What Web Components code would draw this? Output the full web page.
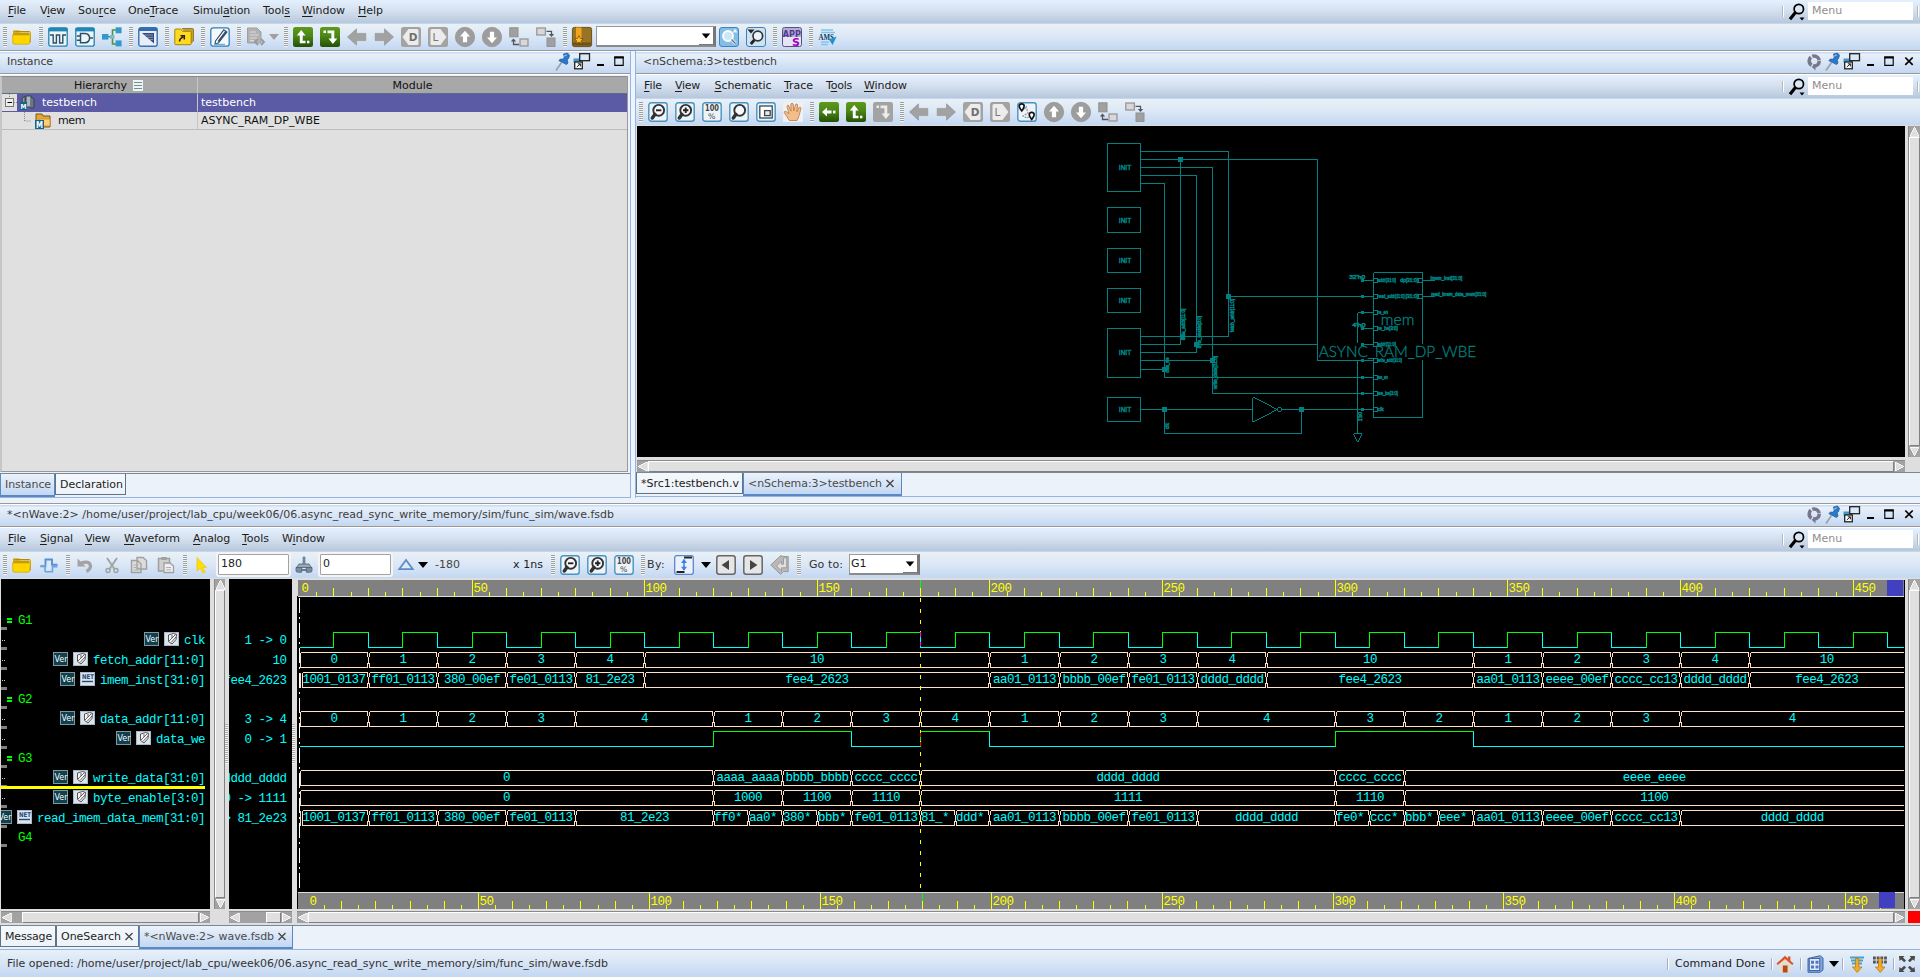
<!DOCTYPE html>
<html lang="en">
<head>
<meta charset="utf-8">
<title>nWave</title>
<style>
html,body{margin:0;padding:0;height:100%;overflow:hidden}
body{font:11px "DejaVu Sans",sans-serif;color:#1c1c1c;background:#ebf2fa}
</style>
</head>
<body>
<verdi-app></verdi-app>
<script>
const define=(name,html,setup)=>customElements.define(name,class extends HTMLElement{
  connectedCallback(){
    if(this.shadowRoot)return;
    const r=this.attachShadow({mode:'open'});
    const t=document.createElement('template');
    t.innerHTML=typeof html==='function'?html(this):html;
    r.append(t.content.cloneNode(true));
    if(setup)setup(this,r);
  }
});
const esc=s=>s.replace(/&/g,'&amp;').replace(/</g,'&lt;').replace(/>/g,'&gt;');
const ctx=document.createElement('canvas').getContext('2d');
const spacing=(text,w)=>{
  ctx.font='11px "DejaVu Sans"';
  return w?((w-ctx.measureText(text).width)/text.length).toFixed(3):0;
};

/* ---- icons, drawn on a 20x20 grid ---- */
const frame='<rect x=".8" y=".8" width="18.4" height="18.4" rx="2.5" fill="#edf3f8" stroke="#4a93bd" stroke-width="1.4"/>';
const green='<rect width="20" height="20" rx="2.5" fill="url(#g)"/><defs><linearGradient id="g" x2="0" y2="1"><stop stop-color="#5f9a1c"/><stop offset=".45" stop-color="#4b8716"/><stop offset="1" stop-color="#245006"/></linearGradient></defs>';
const gbox='<rect width="20" height="20" rx="2.5" fill="#a3a3a3"/>';
const upTurn='<path d="M3.8 8.5 8.2 3l4.400 5.500h-2.900v5.200h2.800v2.600H6.800V8.500z" fill="#fff"/><rect x="14" y="13.700" width="2.400" height="2.600" fill="#fff"/>';
const downTurn='<rect x="3.500" y="3.500" width="2.500" height="2.500" fill="#fff"/><path d="M7.500 3.500h6.800v8h3L12.900 17l-4.400-5.500h2.900V6.200H7.500z" fill="#fff"/>';
const folder='<path d="M1 4.5q0-1 1-1h5l1.5 2H1z" fill="#c99500"/><path d="M1 5.5h16v11H1z" fill="#c99a00"/><path d="M3.5 4.500h13.500q1.200 0 1.200 1v10" fill="none" stroke="#b98900"/><path d="M.5 8h16.600l1.400-1.600-.8 9.200q-.2 1.600-1.800 1.600H2q-1 0-1.100-1z" fill="#ffd500" stroke="#caa000" stroke-width=".7"/>';
const mag=(inner)=>frame+'<circle cx="10.700" cy="8.300" r="5.400" fill="#f7fafc" stroke="#333" stroke-width="1.900"/><path d="M7 12.300 4.300 16" stroke="#333" stroke-width="3.500" stroke-linecap="round"/>'+inner;
const circ='<circle cx="10" cy="10" r="9.7" fill="#9d9d9d" stroke="#8b8b8b" stroke-width=".6"/>';
const I={
folder,
wave:'<rect x=".8" y=".8" width="18.4" height="18.4" rx="2" fill="#eef5f9" stroke="#2383ad" stroke-width="1.3"/><path d="M.5 .8h19v3.6H.5z" fill="#1f86b6"/><path d="M2 8h3.200v8h3.200V8h3.200v8h3.200V8H18" fill="none" stroke="#2c4f6b" stroke-width="1.4"/>',
and:'<rect x=".8" y=".8" width="18.4" height="18.4" rx="2" fill="#eef5f9" stroke="#2383ad" stroke-width="1.3"/><path d="M.5 .8h19v3.6H.5z" fill="#1f86b6"/><path d="M5.5 6.5h4.5q4.5.4 4.6 4.6-.2 4.4-4.6 4.6H5.5zM1.8 9h3.700M1.8 13.300h3.700M14.6 11.100H18" fill="none" stroke="#2c4f6b" stroke-width="1.5"/>',
hier:'<path d="M5 9.8h7M15 3h-4.5v14H15" fill="none" stroke="#4d9440" stroke-width="1.6"/><g fill="#3498cf"><rect y="7" width="6.4" height="5.6"/><rect x="13.6" y=".3" width="6" height="6"/><rect x="13.6" y="13.4" width="6" height="6"/></g><rect x="8" y="8" width="4.5" height="3.8" fill="#7fb6dc"/>',
tri:'<rect x=".8" y=".8" width="18.4" height="18.4" rx="2" fill="#e8eef6" stroke="#3b70b0" stroke-width="1.4"/><path d="M1 1h18v3H1z" fill="#2f6db5"/><path d="M4 6h12v10.5z" fill="#344a78"/><path d="M6.5 8h8.500M9 10.300h6M11.5 12.600H15" stroke="#9fb1d2" stroke-width=".8"/>',
folder2:'<path d="M8 1.500h10.500q1 0 1 1V14l-2.500 2" fill="#c8a12a" stroke="#7d6a2c" stroke-width=".8"/><path d="M.8 3q0-1 1-1h5l1.700 2.300h7.700q1 0 1 1v11.400q0 1-1 1H1.800q-1 0-1-1z" fill="#ffd91a" stroke="#9b7c08" stroke-width=".9"/><path d="M5.500 14.500q0-3 3.700-4.500M6.500 8.800h3.800v3.800" stroke="#222" stroke-width="1.500" fill="none"/>',
edit:'<rect x=".8" y=".8" width="18.4" height="18.4" rx="2.5" fill="#f4f9fd" stroke="#2f7fb7" stroke-width="1.3"/><path d="M5.500 14 13.800 2.800l3 2.200L8.500 15.800l-3.400 1.400z" fill="#fff" stroke="#33506b" stroke-width="1.2"/><path d="M8.300 14.500 16.200 4.400" stroke="#33506b" stroke-width="1.800"/><path d="M5 17.500H15" stroke="#6caed6" stroke-width="1.400"/>',
doc:'<path d="M1.5 1h9.500l4 4v11H1.500z" fill="#b2b2b2" stroke="#a0a0a0"/><path d="M4 5h6M4 8h8.500M4 11h7M4 13.700h4" stroke="#dadada" stroke-width="1.200"/><path d="m12 12-3 3 3 3M15 12l3 3-3 3" fill="none" stroke="#999" stroke-width="1.8"/>',
upturn:green+upTurn,downturn:green+downTurn,
leftturn:green+'<path d="M3 10l5-4.600v3h4.500v3.200H8v3z" fill="#fff"/><rect x="14" y="8.600" width="2.500" height="2.800" fill="#fff"/>',
gdownturn:gbox+downTurn.replace(/#fff/g,'#ececec'),
left:'<path d="M.5 10 9.5 1.800v4.600h9.300v7.200H9.500v4.600z" fill="#a2a2a2" stroke="#8f8f8f" stroke-width=".6"/>',
right:'<path d="M19.5 10l-9-8.200v4.600H1.200v7.200h9.300v4.600z" fill="#a2a2a2" stroke="#8f8f8f" stroke-width=".6"/>',
d:gbox+'<path d="M1.5 10 7.500 2H16q1.500 0 1.500 1.500v13Q17.500 18 16 18H7.500z" fill="#ececec"/><text x="7.8" y="14" font-size="10.500" font-weight="bold" fill="#6f6f6f">D</text>',
l:gbox+'<path d="M18.5 10 12.500 2H4Q2.500 2 2.500 3.500v13Q2.500 18 4 18h8.500z" fill="#ececec"/><text x="4.6" y="14" font-size="10.500" fill="#777">L</text>',
up:circ+'<path d="M10 3.800 15 9.600h-2.900v5.600H7.900V9.600H5z" fill="#fff"/>',
down:circ+'<path d="M10 16.200 5 10.400h2.900V4.800h4.200v5.600H15z" fill="#fff"/>',
j1:'<rect x=".8" y=".8" width="8.2" height="9" fill="#a0a0a0" stroke="#909090"/><rect x="11" y="12" width="8" height="7" fill="#d8d8d8" stroke="#979797" stroke-width="1.3"/><path d="M4.500 12.400V17.500H10" fill="none" stroke="#555" stroke-width="1.3"/><path d="m1.800 14.500 2.700-3 2.700 3z" fill="#555"/>',
j2:'<rect x=".8" y="1" width="8.6" height="7" fill="#d8d8d8" stroke="#979797" stroke-width="1.3"/><rect x="11" y="11" width="8" height="8.4" fill="#a0a0a0" stroke="#909090"/><path d="M10.500 4.400h5V8" fill="none" stroke="#555" stroke-width="1.3"/><path d="m12.800 7 2.700 3 2.700-3z" fill="#555"/>',
book:'<rect x=".4" y=".4" width="19.2" height="19.2" rx="2" fill="#977324" stroke="#6d5117"/><path d="M1 15.500h18v3H1z" fill="#6e521a"/><path d="M4 .500h5.500v14H4z" fill="#f2a41e"/><path d="m6.800 8.500 1.500 2.900 3 .3-2.300 2 .7 3-2.900-1.600-2.800 1.600.7-3-2.200-2 3-.3z" fill="#ffbb33" stroke="#704b00" stroke-width=".7"/>',
find1:'<rect x=".5" y=".5" width="19" height="19" rx="2.5" fill="#84bde6" stroke="#3b86c2"/><circle cx="9" cy="9" r="5" fill="#cfe6f7" stroke="#fff" stroke-width="1.8"/><path d="m12.500 12.500 4 4" stroke="#fff" stroke-width="3"/><path d="m12.500 12.500 4 4" stroke="#476a87" stroke-width="1.2"/><path d="M13.500 5.500h5l-2.500-4z" fill="#e8f3fb"/>',
find2:'<rect x=".5" y=".5" width="19" height="19" rx="2.5" fill="#cfe2f1" stroke="#3e81b4"/><circle cx="11.8" cy="9" r="4.8" fill="#eaf3fa" stroke="#333" stroke-width="1.7"/><path d="m8.300 13-3.500 4" stroke="#222" stroke-width="2.8"/><path d="M1.500 2.500h7L5 6.500z" fill="#222"/>',
apps:'<rect x=".5" y=".5" width="19" height="19" rx="2" fill="#e8e3f2" stroke="#56517f"/><path d="M1 1h18v9H1z" fill="#8a7dc0" opacity=".55"/><text x=".8" y="10.400" font-size="9" font-weight="bold" textLength="18" lengthAdjust="spacingAndGlyphs" fill="#4c3b8f">APP</text><text x="10" y="18.500" font-size="11" font-weight="bold" fill="#a000c8">S</text>',
ams:'<path d="M3 3h12M3 5.500h14M3 15h8M3 17.500h7" stroke="#7cc6ec" stroke-width="1.400"/><text x=".5" y="13" font-size="7.500" font-weight="bold" font-family="Liberation Serif" textLength="15.500" lengthAdjust="spacingAndGlyphs" fill="#0b3b5e">AMS</text><path d="m11 12.500 7.700-3-4.200 8.400z" fill="#1f93cf"/>',
zout:mag('<path d="M8 8.300h5.400" stroke="#222" stroke-width="1.9"/>'),
zin:mag('<path d="M8 8.300h5.400M10.700 5.600V11" stroke="#222" stroke-width="1.9"/>'),
zfit:mag(''),
z100:frame+'<text x="3" y="9.400" font-size="8.500" font-weight="bold" fill="#444" textLength="14" lengthAdjust="spacingAndGlyphs">100</text><text x="6" y="17.400" font-size="7.800" fill="#444">%</text>',
area:frame+'<rect x="3.8" y="4" width="12.4" height="12" fill="#fff" stroke="#3a4654" stroke-width="1.3"/><rect x="8.6" y="8.600" width="5.600" height="5" fill="#e5ebf2" stroke="#3a4654" stroke-width="1.3"/>',
hand:'<rect width="20" height="20" fill="#eef1f4"/><path d="M6.300 18.500Q3.500 13.500 1.300 10.800 1 9 2.900 9.400L6 11.800 4 4.600Q4 2.800 5.600 3.400L8 9.200 7.900 2Q9 .2 10.200 2L10.800 9l1.800-6.600q1.600-1.200 2.100.6L13.800 10l2.400-4.600q1.600-.6 1.800.8-1 4-2 7.500-1 3-1.900 4.800z" fill="#f5bd8c" stroke="#b87945" stroke-width=".8"/>',
path:frame+'<path d="M5 9 9.500 5M9 4l2 7-5 3 4 2 3-2" fill="none" stroke="#8b98a5" stroke-width="1.200" stroke-dasharray="2 1"/><path d="M2.500 2.800q2.200-2 4.400 0 1 2-2.200 6-3.200-4-2.200-6zM12.500 11.400q2.200-2 4.400 0 1 2-2.200 6-3.200-4-2.200-6z" fill="#fff" stroke="#111" stroke-width="1.7"/>',
pulse:'<path d="M1.500 11.200h5V4.500h6.500v5.200h5.500" fill="none" stroke="#5590d6" stroke-width="1.900"/><path d="M1.500 11.200h4.500v5.500h7.500v-5h5" fill="none" stroke="#6fa3dd" stroke-width="1.600" stroke-dasharray="5 0"/><path d="M7.700 8.500h4v6h-4z" fill="#dce8f5"/>',
undo:'<path d="M5 8.500q10-3.500 10.500 2.500 0 3.500-4 5.500" fill="none" stroke="#a3a3a3" stroke-width="3.2"/><path d="M2.500 3.500v8h8.300z" fill="#a3a3a3"/>',
cut:'<path d="m5 3 7.500 11M15 3 7.500 14" stroke="#a0a0a0" stroke-width="1.8"/><circle cx="6" cy="15.500" r="2" fill="none" stroke="#a0a0a0" stroke-width="1.4"/><circle cx="14" cy="15.500" r="2" fill="none" stroke="#a0a0a0" stroke-width="1.4"/>',
copy:'<path d="M8 2.500h6l3.500 3V14H8zM2.500 5.500h6L12 9v8.500H2.500z" fill="#dcdcdc" stroke="#a0a0a0" stroke-width="1.4"/><path d="M4.500 10h5M4.500 12.500h5M4.500 15h5" stroke="#b0b0b0"/>',
paste:'<path d="M2.500 3.500h11V16h-11z" fill="#cfcfcf" stroke="#a0a0a0" stroke-width="1.5"/><rect x="5.300" y="2" width="5.400" height="3" fill="#a0a0a0"/><path d="M8 8h6l3.500 3v6.500H8z" fill="#efefef" stroke="#a0a0a0" stroke-width="1.3"/><path d="M10 12.500h5M10 14.800h5" stroke="#b0b0b0"/>',
cursor:'<path d="M5 2.500V16l3.200-2.800 2.800 5 2.200-1.200-2.600-4.600h4z" fill="#ffe000" stroke="#e6c000" stroke-width=".6"/>',
stamp:'<rect x="8.600" y="1.500" width="2.800" height="8" rx="1.200" fill="#73859c"/><path d="M5 9h10l2.500 3.500h-15z" fill="#9aa8b8" stroke="#566b82" stroke-width=".9"/><path d="M2 12.500h5.700v4.700H4q-2 0-2-1.500zM12.300 12.500H18v3.200q0 1.500-2 1.500h-3.700z" fill="#7a8ca1" stroke="#4e6278" stroke-width=".8"/><path d="M7.700 15h4.600" stroke="#4e6278" stroke-width="1.600"/>',
delta:'<path d="M10 5 3.200 14.200h13.600z" fill="#dce8f5" stroke="#5b8cc8" stroke-width="1.7"/>',
edge:'<rect x=".7" y=".7" width="18.600" height="18.600" rx="2" fill="#ebf2fb" stroke="#5f84d0" stroke-width="1.3"/><path d="M10 2.500h8M2.500 17h8" stroke="#222" stroke-width="1.800"/><path d="M10 4.500v10.500" stroke="#3f7fe8" stroke-width="1.6"/><path d="m7 8 3-4 3 4zM7 11.800l3 4 3-4z" fill="#3f7fe8"/>',
prev:'<rect x=".8" y=".8" width="18.400" height="18.400" rx="2.500" fill="#e6e6e6" stroke="#666" stroke-width="1.5"/><path d="M13 5v10l-7.400-5z" fill="#444"/>',
next:'<rect x=".8" y=".8" width="18.400" height="18.400" rx="2.500" fill="#e6e6e6" stroke="#666" stroke-width="1.5"/><path d="M7 5v10l7.400-5z" fill="#444"/>',
chev:'<path d="M10.500.8.8 10l9.700 9.200 3-2.600h4.700V1.500H14z" fill="#b8b8b8" stroke="#989898"/><path d="M13.500 3h3.200v9.800h-5.200v3L6.500 11l5-4.800v3h2z" fill="#e0e0e0" stroke="#999" stroke-width=".9"/>',
circle:'<circle cx="7.200" cy="9" r="5" fill="none" stroke="#77788f" stroke-width="3.600" stroke-dasharray="9 1.470"/><path d="m4.500 14.500 4 4v-5z" fill="#77788f"/>',
pin:'<path d="m0 18.500 5.500-8" stroke="#9aa3ad" stroke-width="1.600"/><path d="M7.500 2 11.500 1l2 2.300-.9 3.300-1.400 1 .8 3.400-1.500 1.600L2.800 8.600l1.800-1.500 2.600.1 1-2z" fill="#2b78c8" stroke="#1b549b" stroke-width=".7"/><path d="m8 4.200 2.800-1.500" stroke="#8ec0f0" stroke-width="1.300"/>',
float:'<path d="M1.500 6.500h9v4h-9z" fill="#3c96cf"/><rect x="7.700" y="1.700" width="9.800" height="7" fill="#dbe8f7" stroke="#222" stroke-width="1.300"/><rect x="2.700" y="10" width="7.600" height="6.800" fill="#fff" stroke="#222" stroke-width="1.300"/><path d="m4.800 15 3.400-3M5.800 11.800h2.600v2.600" fill="none" stroke="#222"/>',
min:'<path d="M4 12h7v2H4z" fill="#000"/>',
max:'<path d="M5.800 5v8.400h8.400V5z" fill="none" stroke="#000" stroke-width="1.1"/><path d="M5.200 4.500h9.500v2H5.200z" fill="#000"/>',
x:'<path d="m6.300 5.500 7.400 7.400M13.700 5.500l-7.400 7.400" stroke="#000" stroke-width="1.7"/>',
search:'<circle cx="11.800" cy="7" r="4.700" fill="#dbe6f3" stroke="#000" stroke-width="1.700"/><path d="m8.400 10.600-5.400 6.600" stroke="#000" stroke-width="3.200"/><path d="M12.500 15.400h5l-2.500 3z" fill="#000"/>',
home:'<path d="M4 9.500 10 4l6 5.500v9H4z" fill="#e6dccb"/><path d="M7.800 11.500h4.800v7H7.800z" fill="#b34a1d"/><path d="M1.500 9.500 10 1.800l3 2.600V2.500h2.400v4.200l3.100 2.800-1.200 1.500L10 5 2.700 11z" fill="#d9532a"/>',
win:'<path d="m3 4.500 12-2.800 3 2.300v12l-3 2.300H3z" fill="#7da4dd" stroke="#4467a6"/><rect x="4.300" y="4.500" width="10.400" height="12" fill="#dfe9f8" stroke="#4467a6"/><path d="M6 6.800h3v3H6zM10.500 6.800h3v3h-3zM6 11.400h3v3H6zM10.500 11.400h3v3h-3z" fill="#5078bf"/>',
dn1:'<path d="M3 3.500h14M4 6.500h12M5 9.500h10" stroke="#4ba0c3" stroke-width="1.800"/><path d="M8.500 4.500h3.400v8.500H15l-4.800 5.500L5.400 13h3.100z" fill="#f0a92b" stroke="#b07510" stroke-width=".7"/>',
dn2:'<path d="M3 4h14M3 8h14" stroke="#555" stroke-width="2.800" stroke-dasharray="2.800 .9"/><path d="M8.500 4.500h3.400v8.500H15l-4.800 5.500L5.400 13h3.100z" fill="#f0a92b" stroke="#b07510" stroke-width=".7"/>',
expand:'<path d="M2 2h5.500L6 3.600l3 2.900-1.800 1.800-3-2.900L2.500 7zM18 2h-5.500L14 3.600l-3 2.900 1.800 1.800 3-2.900L17.500 7zM2 18h5.500L6 16.400l3-2.900-1.800-1.800-3 2.900L2.500 13zM18 18h-5.500l1.500-1.600-3-2.900 1.800-1.800 3 2.900 1.700-1.600z" fill="#4a4a4a"/>'
};
define('ui-icon',el=>`<style>:host{display:block;width:20px;height:20px;flex:none}svg{display:block;overflow:visible}</style><svg width="20" height="20" viewBox="0 0 20 20" font-family="DejaVu Sans">${I[el.getAttribute('name')]||''}</svg>`);
define('ui-text',el=>{const s=el.getAttribute('text');return `<style>:host{display:block;white-space:pre;flex:none}span{letter-spacing:${spacing(s,+el.getAttribute('w'))}px}</style><span>${esc(s)}</span>`});
define('tool-grip','<style>:host{display:block;width:4px;height:20px;margin-right:5px;flex:none;background:repeating-linear-gradient(#9a9fa6 0 1px,#f6f6f0 1px 2px)}</style>');
define('drop-arrow','<style>:host{display:block;width:0;height:0;border:5px solid transparent;border-top:6px solid var(--c,#000);border-bottom:0;flex:none}</style>');
define('tool-bar',el=>`<style>:host{display:flex;height:26px;box-sizing:border-box;padding:0 0 1px 3px;align-items:center;background:linear-gradient(#eaf1f6,#dce8f6 45%,#c4d7f2)}ui-icon{margin-right:7px}</style>${(el.getAttribute('icons')||'').split(' ').filter(Boolean).map(n=>n==='|'?'<tool-grip></tool-grip>':n==='v'?'<drop-arrow style="--c:#a0a0a0;margin:0 5px 0 -4px"></drop-arrow>':`<ui-icon name="${n}"></ui-icon>`).join('')}<slot></slot>`);
define('menu-bar',el=>`<style>
:host{display:flex;height:24px;box-sizing:border-box;padding-left:8px;align-items:center;background:linear-gradient(#e5f0ff,#d6e1ef 45%,#b7c8dc);border-bottom:1px solid #c3d6f4}
span.i{display:block;flex:none;white-space:nowrap;margin-top:-2px}u{text-underline-offset:2px;text-decoration-thickness:1px}
.sep{width:1px;height:11px;background:#fff;border-left:1px solid #b0b8c2;flex:none}
.in{width:101px;height:18px;background:#fff;color:#8e8e8e;line-height:18px;padding-left:4px;margin:0 4px 1px 0;flex:none}
.sp{flex:1}ui-icon{margin:0 1px 0 3px}
</style>${JSON.parse(el.getAttribute('items')).map(([t,w,p])=>`<span class="i" style="width:${p}px;letter-spacing:${spacing(t.replace('_',''),w)}px">${t.replace(/_(.)/,'<u>$1</u>')}</span>`).join('')}<span class="sp"></span><span class="sep"></span><ui-icon name="search"></ui-icon><div class="in">Menu</div><span class="sep" style="margin-right:1px"></span>`);
define('title-bar',el=>`<style>
:host{display:flex;height:23px;box-sizing:border-box;align-items:center;padding-bottom:2px;color:#3c3c3c;border-top:1px solid #fff;border-bottom:1px solid #999;box-shadow:0 1px #fff;margin-bottom:1px;background:linear-gradient(#c7dbf7 0 1px,#e9f1fa 2px,#d6e4f5 55%,#c4d7f2)}
ui-text{padding-left:7px;flex:1}.b{display:flex;margin-right:1px}
</style><ui-text text="${esc(el.getAttribute('text'))}" w="${el.getAttribute('w')}"></ui-text><div class="b">${el.getAttribute('icons').split(' ').map(n=>{const w={circle:19,pin:16,float:21,min:16,max:20,x:20}[n];return `<ui-icon name="${n}" style="width:${w}px"></ui-icon>`}).join('')}</div>`);
define('tab-bar',el=>`<style>
:host{display:flex;height:25px;box-sizing:border-box;border-top:1px solid #77889a;border-bottom:1px solid #96b4e0;background:#ebf2fa;align-items:flex-start}
.t{box-sizing:border-box;height:21px;display:flex;align-items:center;background:linear-gradient(#f4f8fc,#edf3f9);border:1px solid #5f7387;border-top:0;padding-left:4px;flex:none}
.on{height:23px;color:#4b4b4b;background:linear-gradient(#ebf2fa,#c3d7f3);border:1px solid #5b87c2;border-width:0 1px 2px}
svg{margin-left:4px}
</style>${JSON.parse(el.getAttribute('tabs')).map(([t,w,tw,on,x])=>`<div class="t${on?' on':''}" style="width:${tw}px"><ui-text text="${esc(t)}" w="${w}"></ui-text>${x?'<svg width="8" height="9" viewBox="0 0 8 9"><path d="m.5 1 7 7M7.500 1l-7 7" stroke="#444" stroke-width="1.3"/></svg>':''}</div>`).join('')}`);
define('scroll-bar',el=>{
  const v=el.hasAttribute('vertical'),a=el.getAttribute('lead')||0,b=el.getAttribute('tail')||0;
  const tri=(p)=>`<svg width="11" height="11" viewBox="0 0 11 11" shape-rendering="crispEdges"><path d="${p}" fill="#dedede" stroke="#fff" stroke-width=".8"/></svg>`;
  return `<style>:host{display:flex;flex-direction:${v?'column':'row'};box-sizing:border-box;background:#a2a2a2;overflow:hidden;${v?'width:12px':'height:12px'};border:solid #8a8a8a;border-width:${v?'0 0 0 1px':'1px 0 0'}}
  .th{flex:1;background:#e0e0e0;border:1px solid;border-color:#fff #808080 #808080 #fff;box-sizing:border-box}svg{flex:none}</style>
  ${tri(v?'M5.5 1 10 10H1z':'M1 5.5 10 1v9z')}<i style="flex:0 0 ${a}px"></i><div class="th"></div><i style="flex:0 0 ${b}px"></i>${tri(v?'M5.5 10 10 1H1z':'M10 5.5 1 1v9z')}`});

/* ---- instance tree ---- */
define('instance-tree',`<style>
:host{display:grid;grid-template-columns:196px 1fr;grid-template-rows:17px 18px 18px 1fr;flex:1;margin:1px 2px 1px 0;border:2px solid #999;border-width:1px 1px 1px 2px;border-color:#8c8c8c #999 #999 #c6c6c6;background:#e0e0e0;color:#111;box-sizing:border-box}
.h{background:#a8a8a8;border-bottom:1px solid #5a6f8d;display:flex;justify-content:center;align-items:center;gap:6px;box-sizing:border-box}
.hl{padding-left:18px}
.c{display:flex;align-items:center;box-sizing:border-box;border-bottom:1px solid #bcbcbc;overflow:hidden}
.l{border-right:1px solid #c6c6c6}.s{background:#5b5aa5;color:#fff;border-bottom-color:#5b5aa5}
.m{padding-left:3px}svg{display:block;flex:none}.s0{background:linear-gradient(90deg,#e0e0e0 15px,#5b5aa5 15px)}
</style>
<div class="h l hl"><ui-text text="Hierarchy" w="53"></ui-text><svg width="10" height="11"><rect width="10" height="11" fill="#eef3f3"/><path d="M1 2.500h8M1 5.500h8M1 8.500h8" stroke="#6f8f97" stroke-width="1.2"/></svg></div><div class="h">Module</div>
<div class="c l s s0"><svg width="40" height="17"><path d="M7.500 0v4M12 8.500h3" stroke="#888" stroke-dasharray="1 1"/><rect x="3.500" y="4.500" width="8" height="8" fill="#eee" stroke="#777"/><path d="M5.500 8.500h4.500" stroke="#000"/><path d="M20 4.500 23 2v10l-2 2z" fill="#8b959c" stroke="#38444d"/><path d="M24 2h5v11h-5z" fill="#a9b6be" stroke="#38444d"/><path d="m29 3 3 2v9h-4" fill="#6a7780" stroke="#38444d"/><rect x="18" y="8" width="7" height="8" fill="#156487"/><text x="18.500" y="15" font-size="7" font-weight="bold" fill="#fff" textLength="6" lengthAdjust="spacingAndGlyphs">M</text></svg><ui-text text="testbench" w="55"></ui-text></div>
<div class="c s m"><ui-text text="testbench" w="55"></ui-text></div>
<div class="c l"><svg width="56" height="17"><path d="M22.500 0v9H29" fill="none" stroke="#888" stroke-dasharray="1 1"/><path d="M34 2h6l1 2h7v11H34z" fill="#e5a63a" stroke="#7b541b"/><path d="M37 7h11v7H37z" fill="#fbd076" stroke="#c58a2c" stroke-width=".8"/><rect x="33" y="8" width="9" height="9" fill="#156487"/><text x="34" y="15.500" font-size="8" font-weight="bold" fill="#fff" textLength="7" lengthAdjust="spacingAndGlyphs">M</text></svg><ui-text text="mem" w="27"></ui-text></div>
<div class="c m"><ui-text text="ASYNC_RAM_DP_WBE" w="119"></ui-text></div>`);

/* ---- schematic canvas; drawing units are a third of a pixel ---- */
const schematic=()=>{
  let s='';
  const box=(x,y,x2,y2)=>s+=`<rect x="${x}" y="${y}" width="${x2-x}" height="${y2-y}"/>`;
  const t=(x,y,str,len,fs,extra='')=>`<text x="${x}" y="${y}" font-size="${fs}" textLength="${len}" lengthAdjust="spacingAndGlyphs" ${extra}>${esc(str)}</text>`;
  const vt=(x,y,str,len)=>t(0,0,str,len,16,`transform="translate(${x} ${y}) rotate(-90)" class="k"`);
  [[40,184],[232,307],[355,427],[475,547],[595,742],[802,874]].forEach(([a,b])=>box(82,a,182,b));
  s+='<path d="M182 64H445V619H182M182 88H712V691H880M301 80V643H182M182 112H397V790H880M182 136H349V667H182M182 160H253V742H880M182 691H397M182 718H253M340 643H712M436 499H880M182 838H517M517 802V874M605 838H880M253 830V910H664V830M832 638V547H880M832 691V910M847 451H880M847 595H880M847 643H880M880 640V427H1028V640M1028 690V862H880V690M1028 451H1065M1028 499H1065"/>';
  s+='<path d="M517 802 590 838 517 874M820 910h25l-13 24z"/><circle cx="598" cy="838" r="6.5"/>';
  [451,499,547,595,643,691,742,790,838].forEach(y=>{s+=`<rect x="881" y="${y-6}" width="12" height="12"/><rect x="844" y="${y-4}" width="6" height="7" class="f"/>`});
  [451,499].forEach(y=>s+=`<rect x="1015" y="${y-6}" width="12" height="12"/>`);
  [[301,88],[445,499],[307,622],[349,643],[397,691],[254,718],[253,838],[664,838]].forEach(([x,y])=>s+=`<rect x="${x-6}" y="${y-6}" width="12" height="12" class="f"/>`);
  let x='';
  [[120],[279],[399],[519],[676],[846]].forEach(([y])=>x+=t(116,y,'INIT',37,24,'class="k"'));
  x+=t(716,681,'ASYNC_RAM_DP_WBE',472,46,'class="big"')+t(902,586,'mem',101,44,'class="big"');
  x+=t(807,447,"32'h0",48,16,'class="k"')+t(816,591,"4'h0",40,16,'class="k"');
  [[457,'addr[31:0]',54],[505,'read_addr[11:0]',80],[553,'re_en',30],[601,'re_be[3:0]',60],[649,'addr[11:0]',54],[697,'write_addr[31:0]',72],[748,'we_en',30],[796,'we_be[3:0]',60],[844,'clk',18]].forEach(([y,n,w])=>x+=t(893,y,n,w,17,'class="k"'));
  x+=t(960,457,'dp[31:0]',54,17,'class="k"')+t(976,505,'[31:0]',38,17,'class="k"');
  x+=t(1051,450,'imem_inst[31:0]',95,16,'class="k"')+t(1053,498,'read_imem_data_mem[31:0]',165,16,'class="k"');
  x+=vt(314,630,'data_addr[11:0]',94)+vt(362,654,'byte_enable[3:0]',96)+vt(461,606,'fetch_addr[11:0]',100)+vt(410,777,'write_data[31:0]',100)+vt(265,728,'data_we',46)+vt(265,897,'clk',18)+vt(845,873,"1'b0",28);
  return `<g transform="translate(1080.17 130.17) scale(.33333)"><g fill="none" stroke="#008080" stroke-width="3" shape-rendering="crispEdges">${s}</g><g fill="#008080" font-family="Liberation Sans">${x}</g></g>`;
};
define('schematic-view',()=>`<style>:host{display:block;width:1268px;height:331px;background:#000;overflow:hidden}svg{display:block}.f{fill:#008080}.k{stroke:#008080;stroke-width:1.8}.big{font-family:Lato;font-weight:300;stroke:#008080;stroke-width:.9}</style><svg width="1268" height="331" viewBox="637 126 1268 331">${schematic()}</svg>`);

/* ---- signals ---- */
const I0='1001_0137';
const SIG=[
 {n:'clk',v:'1 -> 0',y:632,k:'bit',e:Array.from({length:46},(_,i)=>[i*10,i%2])},
 {n:'fetch_addr[11:0]',v:'10',y:652,e:[[0,'0'],[20,'1'],[40,'2'],[60,'3'],[80,'4'],[100,'10'],[200,'1'],[220,'2'],[240,'3'],[260,'4'],[280,'10'],[340,'1'],[360,'2'],[380,'3'],[400,'4'],[420,'10']]},
 {n:'imem_inst[31:0]',v:'fee4_2623',y:672,net:1,e:[[0,I0],[20,'ff01_0113'],[40,'380_00ef'],[60,'fe01_0113'],[80,'81_2e23'],[100,'fee4_2623'],[200,'aa01_0113'],[220,'bbbb_00ef'],[240,'fe01_0113'],[260,'dddd_dddd'],[280,'fee4_2623'],[340,'aa01_0113'],[360,'eeee_00ef'],[380,'cccc_cc13'],[400,'dddd_dddd'],[420,'fee4_2623']]},
 {n:'data_addr[11:0]',v:'3 -> 4',y:711,e:[[0,'0'],[20,'1'],[40,'2'],[60,'3'],[80,'4'],[120,'1'],[140,'2'],[160,'3'],[180,'4'],[200,'1'],[220,'2'],[240,'3'],[260,'4'],[300,'3'],[320,'2'],[340,'1'],[360,'2'],[380,'3'],[400,'4']]},
 {n:'data_we',v:'0 -> 1',y:731,k:'bit',e:[[0,0],[120,1],[160,0],[180,1],[200,0],[300,1],[340,0]]},
 {n:'write_data[31:0]',v:'dddd_dddd',y:770,e:[[0,'0'],[120,'aaaa_aaaa'],[140,'bbbb_bbbb'],[160,'cccc_cccc'],[180,'dddd_dddd'],[300,'cccc_cccc'],[320,'eeee_eeee']]},
 {n:'byte_enable[3:0]',v:'0 -> 1111',y:790,e:[[0,'0'],[120,'1000'],[140,'1100'],[160,'1110'],[180,'1111'],[300,'1110'],[320,'1100']]},
 {n:'read_imem_data_mem[31:0]',v:'-> 81_2e23',y:810,net:1,e:[[0,I0],[20,'ff01_0113'],[40,'380_00ef'],[60,'fe01_0113'],[80,'81_2e23'],[120,'ff0*'],[130,'aa0*'],[140,'380*'],[150,'bbb*'],[160,'fe01_0113'],[180,'81_*'],[190,'ddd*'],[200,'aa01_0113'],[220,'bbbb_00ef'],[240,'fe01_0113'],[260,'dddd_dddd'],[300,'fe0*'],[310,'ccc*'],[320,'bbb*'],[330,'eee*'],[340,'aa01_0113'],[360,'eeee_00ef'],[380,'cccc_cc13'],[400,'dddd_dddd']]}
];
const mono='font-family="Liberation Mono" font-size="12.5" letter-spacing="-.5"';
define('signal-names',()=>{
  let s='';
  [627,647,667,687,706,726,746,765,785,805,825,844].forEach(y=>s+=`<rect x="1" y="${y}" width="6" height="3" fill="#808080"/>`);
  [['G1',624],['G2',703],['G3',762],['G4',841]].forEach(([g,y],i)=>{
    s+=`<text x="18" y="${y}" fill="#0f0">${g}</text>`;
    if(i<3)s+=`<path d="M7 ${y-5}h5M7 ${y-2}h5" stroke="#0f0" stroke-width="2"/>`;
  });
  SIG.forEach(g=>{
    const x=205-7*g.n.length,y=g.y;
    s+=`<path d="M2 ${y+8.500}h1m1 0h1" stroke="#ccc"/><text x="${x}" y="${y+11.5}" fill="#0ff">${g.n}</text>
    <rect x="${x-39.500}" y="${y+.5}" width="14" height="13" fill="#103f4e" stroke="#7d979e"/><text x="${x-38.500}" y="${y+10}" font-family="DejaVu Sans" font-size="8.500" letter-spacing="0" fill="#fff" textLength="13" lengthAdjust="spacingAndGlyphs">Ver</text>
    <rect x="${x-19.500}" y="${y+.5}" width="14" height="13" fill="#dde3ea" stroke="#a9b9cb"/>`;
    s+=g.net?`<text x="${x-18}" y="${y+7}" font-family="DejaVu Sans" font-size="6.500" letter-spacing="0" font-weight="bold" fill="#234a7d" textLength="12" lengthAdjust="spacingAndGlyphs">NET</text><path d="M${x-18} ${y+9.500}h11" stroke="#234a7d" stroke-width="1.4"/>`
      :`<path d="M${x-15.5} ${y+3}l5-1.500 3 .8-.5 5.200-4 4.500-3.500-2.500z" fill="#f5f5f5" stroke="#444" stroke-width=".9"/><path d="M${x-15} ${y+9}l6.500-6.500M${x-13} ${y+10.500}l5-5.500M${x-12} ${y+3}v3" stroke="#444" stroke-width=".8"/>`;
  });
  s+='<rect x="1" y="786" width="204" height="3" fill="#ff0"/>';
  return `<style>:host{display:block;background:#000;width:209px;height:330px;overflow:hidden}svg{display:block}</style><svg width="209" height="330" viewBox="1 579 209 330" ${mono}>${s}</svg>`;
});
define('signal-values',()=>`<style>:host{display:block;background:#000;width:63px;height:330px;overflow:hidden}svg{display:block}text{white-space:pre}</style><svg width="63" height="330" viewBox="229 579 63 330" ${mono} fill="#0ff">${SIG.map(g=>`<text x="${286.5-7*g.v.length}" y="${g.y+12}">${esc(g.v)}</text>`).join('')}</svg>`);
const ruler=(x0,k,y,end)=>{
  let p='',t='';
  for(let v=0;v<=462;v+=5){
    const x=Math.floor(x0+k*v)+.5; if(x>end)break;
    if(v===0){t+=`<text x="${x+2}" y="${y+12}">0</text>`;continue}
    p+=`M${x} ${y+(v%50?v%10?12:8:0)}V${y+16}`;
    if(v%50===0)t+=`<text x="${x+1}" y="${y+12}">${v}</text>`;
  }
  return `<rect x="298" y="${y}" width="1606" height="16" fill="#808080"/><path d="${p}" stroke="#ff0"/><g fill="#ff0">${t}</g>`;
};
define('wave-view',()=>{
  const X=t=>Math.floor(299.35+3.4532*t)+.5,END=1904;
  let s=ruler(299.35,3.4532,580,1886)+'<rect x="1887" y="580" width="16" height="16" fill="#4040c0"/><path d="M920.5 580v8" stroke="#0f0"/>';
  s+='<path d="M298 596.500H1904M298 892.500H1904" stroke="#dedede"/>';
  let cyan='',grn='',bus='',txt='';
  SIG.forEach(g=>{
    const a=g.y+.5,b=g.y+15.5;
    g.e.forEach(([t,v],i)=>{
      const x=X(t),x2=i+1<g.e.length?X(g.e[i+1][0]):(g.n==='clk'?X(460):END);
      if(g.k){
        const last=g.n==='clk'&&i===g.e.length-1;
        if(v)grn+=`M${x} ${b}V${a}H${x2}`;else cyan+=(i?`M${x} ${a}V${b}`:`M${x} ${b}`)+`H${x2}`;
        if(last)cyan+=`M${x2} ${a}V${b}H${END}`;
      }else{
        const l=i?x+1:(g.net?x+3:x+1),r=x2===END?x2:x2-1;
        bus+=`M${l} ${a}H${r}M${l} ${b}H${r}M${l} ${a}v4M${l} ${b}v-5`;
        if(i===0){bus+=`M${l} ${a}V${b}`;if(g.net)bus+=`M${x+1} ${a}V${b}`}
        if(x2!==END)bus+=`M${r} ${a}v4M${r} ${b}v-5M${x2} ${a+4}V${b-4}`;
        txt+=v.endsWith('*')?`<text x="${x+.5}" y="${g.y+11}">${v}</text>`:`<text x="${(x+x2)/2}" y="${g.y+11}" text-anchor="middle">${v}</text>`;
      }
    });
  });
  s+=`<g fill="none" shape-rendering="crispEdges"><path d="${cyan}" stroke="#0ff"/><path d="${grn}" stroke="#0f0"/><path d="${bus}" stroke="#ffe0c4"/></g><g fill="#0ff">${txt}</g>`;
  s+='<path d="M920.5 598V889" stroke="#ff0" stroke-dasharray="4 7"/><path d="M299.5 598V890" stroke="#fff" stroke-dasharray="15 4 2 4"/><path d="M920.5 632v5M920.5 642v4" stroke="#f0f"/><path d="M920.5 733v4M920.5 742v4" stroke="#f00"/>';
  s+=ruler(307.500,3.4185,893,1895)+'<rect x="1879" y="892" width="16" height="16" fill="#4040c0"/><path d="M922.5 893v8" stroke="#0f0"/>';
  return `<style>:host{display:block;background:#000;width:1608px;height:330px;overflow:hidden}svg{display:block}</style><svg width="1608" height="330" viewBox="297 579 1608 330" ${mono}><rect x="297" y="579" width="1608" height="1" fill="#dedede"/><rect x="297" y="579" width="1" height="17" fill="#dedede"/>${s}</svg>`;
});
define('text-box',el=>`<style>:host{display:block;box-sizing:border-box;width:75px;height:25px;border:2px solid #f4f4f4;background:#fff;box-shadow:inset 0 0 0 1px #a3a3a3;border-radius:3px;line-height:19px;padding-left:3px;color:#222;flex:none}</style>${esc(el.getAttribute('value'))}`);
define('combo-box',el=>`<style>:host{display:flex;box-sizing:border-box;height:21px;border:1px solid #9b9b9b;border-right:2px solid #777;border-bottom:2px solid #8b8b8b;background:#fff;align-items:stretch;flex:none}.v{flex:1;padding-left:1px;line-height:18px}.b{width:14px;display:flex;align-items:center;justify-content:center;border-right:1px solid #777;border-bottom:1px solid #777}drop-arrow{transform:scale(.85)}</style><div class="v">${el.getAttribute('value')||''}</div><div class="b"><drop-arrow></drop-arrow></div>`);
define('status-bar',`<style>:host{display:flex;height:27px;align-items:center;padding:0 3px 0 7px;background:linear-gradient(#e8f1f9,#d9e6f6 45%,#c3d7f2)}.f{flex:1;color:#333}.s{width:1px;height:12px;border-left:1px solid #aab;background:#fff;flex:none}</style>
<ui-text class="f" text="File opened: /home/user/project/lab_cpu/week06/06.async_read_sync_write_memory/sim/func_sim/wave.fsdb" w="601"></ui-text>
<i class="s"></i><ui-text style="margin:0 6px" text="Command Done" w="90"></ui-text><i class="s"></i><ui-icon name="home" style="margin:0 5px 0 2px"></ui-icon><i class="s"></i><ui-icon name="win" style="margin:0 4px 0 3px"></ui-icon><drop-arrow></drop-arrow><i class="s" style="margin-left:3px"></i><ui-icon name="dn1" style="margin:0 3px"></ui-icon><ui-icon name="dn2"></ui-icon><i class="s" style="margin:0 2px 0 3px"></i><ui-icon name="expand"></ui-icon>`);

define('verdi-app',`<style>
:host{display:flex;flex-direction:column;width:1920px;height:977px;background:#ebf2fa}
.top{display:flex;height:447px;flex:none;border-top:1px solid #999}
.left{width:630px;box-sizing:border-box;display:flex;flex-direction:column;flex:none}
.split{width:4px;border:solid #96b4e0;border-width:0 1px;background:#eef4fb;flex:none}
.right{flex:1;display:flex;flex-direction:column;min-width:0}
.canvas{display:grid;grid-template-columns:1268px 12px;column-gap:3px;padding:0 0 0 1px;background:#dedede;grid-template-rows:331px 12px;row-gap:3px;border-top:1px solid #dedede;height:347px;box-sizing:border-box}
.gap{height:5px;background:#ebf2fa;flex:none;border-bottom:1px solid #999}
.wave{display:grid;grid-template-columns:209px 4px 11px 4px 63px 5px 1608px 3px 12px;grid-template-rows:330px 12px;row-gap:2px;height:347px;padding:1px 0 0 1px;background:#dedede;box-sizing:border-box;flex:none}
.h{align-self:center;height:40px;background:repeating-linear-gradient(#aaa 0 1px,#f4f4f4 1px 2px);width:3px}
</style>
<menu-bar items='[["_File",18,32],["V_iew",25,38],["Sou_rce",38,50],["One_Trace",50,65],["Simul_ation",57,70],["Tool_s",27,39],["_Window",43,56],["_Help",25,25]]'></menu-bar>
<tool-bar icons="| folder | wave and hier | tri | folder2 | edit | doc v | upturn downturn left right d l up down j1 j2 | book"><combo-box style="width:120px;margin:0 3px 0 -3px"></combo-box><ui-icon name="find1" style="margin-right:7px"></ui-icon><ui-icon name="find2" style="margin-right:7px"></ui-icon><tool-grip></tool-grip><ui-icon name="apps" style="margin-right:7px"></ui-icon><tool-grip></tool-grip><ui-icon name="ams"></ui-icon></tool-bar>
<div class="top">
 <div class="left">
  <title-bar text="Instance" w="46" icons="pin float min max"></title-bar>
  <instance-tree></instance-tree>
  <tab-bar tabs='[["Instance",46,55,1,0],["Declaration",63,71,0,0]]'></tab-bar>
 </div>
 <div class="split"></div>
 <div class="right">
  <title-bar text="&lt;nSchema:3&gt;testbench" w="134" icons="circle pin float min max x"></title-bar>
  <menu-bar items='[["_File",18,31],["_View",25,39.5],["_Schematic",57,69.5],["_Trace",29,42],["T_ools",26,38],["_Window",43,44]]'></menu-bar>
  <tool-bar icons="| zout zin z100 zfit area hand | leftturn upturn gdownturn | left right d l path up down j1 j2"></tool-bar>
  <div class="canvas"><schematic-view></schematic-view><scroll-bar vertical></scroll-bar><scroll-bar></scroll-bar></div>
  <tab-bar tabs='[["*Src1:testbench.v",98,107,0,0],["&lt;nSchema:3&gt;testbench",134,159,1,1]]'></tab-bar>
 </div>
</div>
<div class="gap"></div>
<title-bar text="*&lt;nWave:2&gt; /home/user/project/lab_cpu/week06/06.async_read_sync_write_memory/sim/func_sim/wave.fsdb" w="607" icons="circle pin float min max x"></title-bar>
<menu-bar items='[["_File",18,32],["_Signal",33,45],["_View",25,39],["_Waveform",56,69],["_Analog",37,49],["_Tools",27,40],["W_indow",43,44]]'></menu-bar>
<tool-bar icons="| folder pulse | undo cut copy paste | cursor"><text-box value="180" style="margin-left:-3px"></text-box><ui-icon name="stamp" style="margin:0 4px 0 3px"></ui-icon><text-box value="0"></text-box><ui-icon name="delta" style="margin:0 2px 0 3px"></ui-icon><drop-arrow></drop-arrow><ui-text text="-180" w="25" style="margin:0 53px 0 7px;color:#444"></ui-text><ui-text text="x 1ns" w="30" style="margin-right:8px"></ui-text><tool-grip></tool-grip><ui-icon name="zout" style="margin-right:7px"></ui-icon><ui-icon name="zin" style="margin-right:7px"></ui-icon><ui-icon name="z100" style="margin-right:7px"></ui-icon><tool-grip style="margin-right:2px"></tool-grip><ui-text text="By:" w="18" style="margin-right:9px;color:#333"></ui-text><ui-icon name="edge"></ui-icon><drop-arrow style="margin:0 5px 0 7px"></drop-arrow><ui-icon name="prev" style="margin-right:7px"></ui-icon><ui-icon name="next" style="margin-right:7px"></ui-icon><ui-icon name="chev" style="margin-right:7px"></ui-icon><tool-grip style="margin-right:8px"></tool-grip><ui-text text="Go to:" w="34" style="margin-right:6px;color:#333"></ui-text><combo-box value="G1" style="width:71px"></combo-box></tool-bar>
<div class="wave">
 <signal-names></signal-names><span></span><scroll-bar vertical style="width:11px"></scroll-bar><span class="h"></span><signal-values></signal-values><span class="h"></span><wave-view></wave-view><span></span><scroll-bar vertical></scroll-bar>
 <scroll-bar lead="10"></scroll-bar><span></span><span></span><span></span><scroll-bar lead="26"></scroll-bar><span></span><scroll-bar></scroll-bar><span></span><div style="background:red"></div>
</div>
<tab-bar tabs='[["Message",47,56,0,0],["OneSearch",60,83,0,1],["*&lt;nWave:2&gt; wave.fsdb",130,154,1,1]]'></tab-bar>
<status-bar></status-bar>`);
</script>
</body>
</html>
